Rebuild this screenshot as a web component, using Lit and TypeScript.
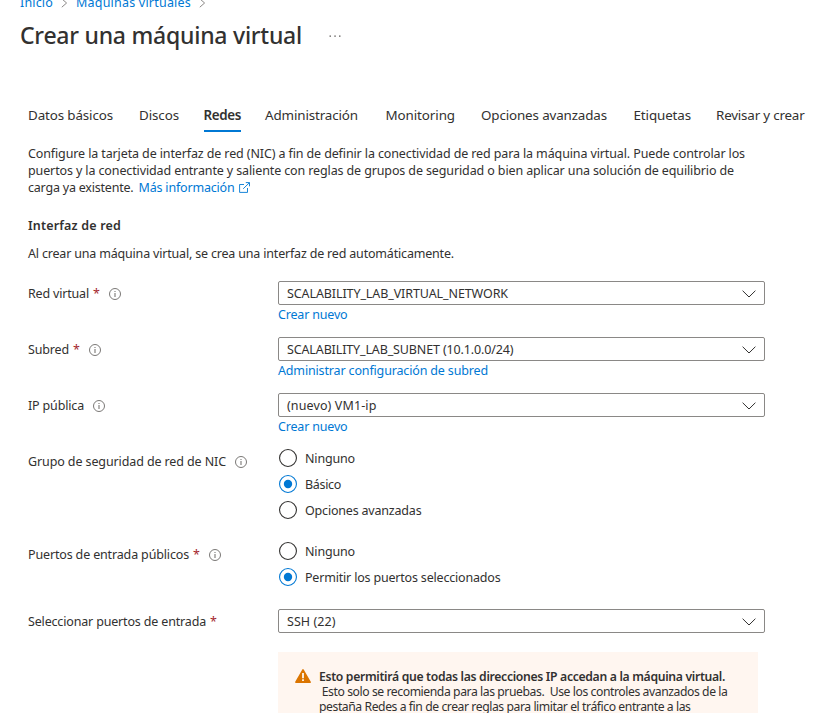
import { LitElement, html, css, svg, nothing } from "lit";
import { customElement, property } from "lit/decorators.js";

/** One line of text, tracked so that its advance equals `width` pixels. */
@customElement("text-run")
class TextRun extends LitElement {
  @property() text = "";
  @property({ type: Number }) width = 0;

  static styles = css`
    :host { display: inline-block; white-space: pre; flex: none; }
    .run { display: inline-block; }
  `;

  firstUpdated() {
    const run = this.renderRoot.querySelector(".run") as HTMLElement;
    const natural = run.getBoundingClientRect().width;
    run.style.letterSpacing = `${(this.width - natural) / this.text.length}px`;
  }

  render() {
    return html`<span class="run">${this.text}</span>`;
  }
}

const t = (text: string, width: number) => html`<text-run .text=${text} .width=${width}></text-run>`;

const infoIcon = html`<svg class="info" viewBox="0 0 12 12" width="12" height="12">
  <circle cx="6" cy="6" r="5.5" fill="none" stroke="#7a7876" />
  <path d="M6 5v4M6 3v1" stroke="#7a7876" stroke-width="1.1" fill="none" />
</svg>`;

const chevronDown = html`<svg class="chevron" viewBox="0 0 14 8" width="14" height="8">
  <path d="M.6.7 7 7 13.4.7" fill="none" stroke="#323130" />
</svg>`;

const crumbArrow = html`<svg class="arrow" viewBox="0 0 7 10" width="7" height="10">
  <path d="M.8.8 5.6 5 .8 9.2" fill="none" stroke="#8a8886" />
</svg>`;

const externalIcon = html`<svg class="external" viewBox="0 0 11 11" width="11" height="11">
  <path d="M5 2.5H.6v7.9h7.9V6M6.8.6h3.7v3.7M10.3.8 4.2 6.8" fill="none" stroke="#0078d4" stroke-width=".9" />
</svg>`;

const warningIcon = html`<svg class="warn-icon" viewBox="0 0 16 14" width="16" height="14">
  <path d="M8 .9 15.1 13.2H.9Z" fill="#db7500" stroke="#db7500" stroke-width="1.6" stroke-linejoin="round" />
  <path d="M8 4v5.2M8 10.2v1.8" stroke="#fff" stroke-width="1.7" />
</svg>`;

type Run = [string, number];

const TABS: Run[] = [
  ["Datos básicos", 85],
  ["Discos", 40],
  ["Redes", 37.5],
  ["Administración", 93],
  ["Monitoring", 69.5],
  ["Opciones avanzadas", 126],
  ["Etiquetas", 57.5],
  ["Revisar y crear", 88.5],
];

@customElement("app-root")
class AppRoot extends LitElement {
  static styles = css`
    :host {
      display: block;
      box-sizing: border-box;
      height: 713px;
      overflow: hidden;
      background: #fff;
      color: #323130;
      font: 12.5px/17px "Noto Sans", "Open Sans", sans-serif;
    }
    svg { display: block; flex: none; }
    .crumbs {
      display: flex;
      align-items: flex-end;
      height: 11px;
      padding-left: 20px;
      color: #0078d4;
    }
    .crumbs .arrow { margin: 0 8px 3px; }
    .title {
      display: flex;
      align-items: center;
      gap: 27px;
      margin: 0;
      padding: 8px 0 0 20px;
      font-size: 23px;
      font-weight: 550;
      line-height: 32px;
    }
    .title svg { margin-top: 2px; }
    .tabs {
      display: grid;
      grid-template-columns: 111px 64.5px 61.5px 120.5px 95.5px 152.5px 82.5px auto;
      justify-items: start;
      padding: 55px 0 0 28px;
      font-size: 13.4px;
    }
    .tab { height: 24px; line-height: 18px; border-bottom: 2px solid transparent; }
    .tab.active { font-weight: 600; border-color: #0078d4; }
    .content { padding: 13px 0 0 28px; }
    .line { display: flex; height: 17px; }
    .link { color: #0078d4; }
    .line .link { margin-left: 5px; }
    .external { margin: 3px 0 0 4px; }
    .heading { margin-top: 21px; font-weight: 600; }
    .sub { margin: 11px 0 19px; }
    .row { display: grid; grid-template-columns: 250px 487px; }
    .row.pick { height: 56px; }
    .label { display: flex; height: 24px; align-items: center; }
    .star { width: 7px; margin-left: 4px; color: #a4262c; }
    .info { margin: 2px 0 0 9px; }
    .select {
      display: flex;
      box-sizing: border-box;
      height: 24px;
      align-items: center;
      justify-content: space-between;
      padding: 0 8px;
      border: 1px solid #8a8886;
      border-radius: 2px;
    }
    .chevron { margin-top: 1px; }
    .below { display: flex; height: 17px; padding-top: 1px; }
    .radios { display: flex; flex-direction: column; gap: 8px; padding-left: 1px; }
    .radio { display: flex; align-items: center; gap: 8px; height: 18px; }
    .nic { height: 93px; }
    .ports { height: 67px; }
    .warning {
      display: flex;
      box-sizing: border-box;
      width: 480px;
      height: 90px;
      margin: 19px 0 0 250px;
      padding: 17px 17px 0;
      background: #fff6f0;
    }
    .warn-text { margin-left: 8px; font-size: 12.2px; line-height: 15px; }
    .warn-text text-run { display: block; }
    .strong { font-weight: 650; }
  `;

  label([text, width]: Run, required: boolean, info: boolean) {
    return html`<div class="label">
      ${t(text, width)}${required ? html`<span class="star">*</span>` : nothing}${info ? infoIcon : nothing}
    </div>`;
  }

  pick(label: Run, required: boolean, info: boolean, value: Run, link?: Run) {
    return html`<div class="row ${link ? "pick" : ""}">
      ${this.label(label, required, info)}
      <div>
        <div class="select">${t(...value)}${chevronDown}</div>
        ${link ? html`<div class="below link">${t(...link)}</div>` : nothing}
      </div>
    </div>`;
  }

  radio(text: Run, on: boolean) {
    return html`<div class="radio">
      <svg viewBox="0 0 18 18" width="18" height="18">
        <circle cx="9" cy="9" r="8.45" fill="none" stroke=${on ? "#0078d4" : "#323130"} stroke-width="1.1" />
        ${on ? svg`<circle cx="9" cy="9" r="4.2" fill="#0078d4" />` : nothing}
      </svg>
      ${t(...text)}
    </div>`;
  }

  render() {
    return html`
      <nav class="crumbs">
        ${t("Inicio", 33)}${crumbArrow}${t("Máquinas virtuales", 115)}${crumbArrow}
      </nav>
      <h1 class="title">
        ${t("Crear una máquina virtual", 282)}
        <svg viewBox="0 0 12 2" width="12" height="2">
          <path d="M.5.5h1.5v1.3H.5zM5.3.5h1.5v1.3H5.3zM10 .5h1.5v1.3H10z" fill="#605e5c" />
        </svg>
      </h1>
      <div class="tabs">
        ${TABS.map((tab) => html`<div class="tab ${tab[0] === "Redes" ? "active" : ""}">${t(...tab)}</div>`)}
      </div>
      <main class="content">
        <div class="line">${t("Configure la tarjeta de interfaz de red (NIC) a fin de definir la conectividad de red para la máquina virtual. Puede controlar los", 717)}</div>
        <div class="line">${t("puertos y la conectividad entrante y saliente con reglas de grupos de seguridad o bien aplicar una solución de equilibrio de", 706)}</div>
        <div class="line">
          ${t("carga ya existente.", 105.5)}
          <span class="link">${t("Más información", 96)}</span>${externalIcon}
        </div>
        <div class="line heading">${t("Interfaz de red", 93)}</div>
        <div class="line sub">${t("Al crear una máquina virtual, se crea una interfaz de red automáticamente.", 426)}</div>
        ${this.pick(["Red virtual", 61], true, true, ["SCALABILITY_LAB_VIRTUAL_NETWORK", 221], ["Crear nuevo", 69.5])}
        ${this.pick(["Subred", 41], true, true, ["SCALABILITY_LAB_SUBNET (10.1.0.0/24)", 226.5], ["Administrar configuración de subred", 210])}
        ${this.pick(["IP pública", 56], false, true, ["(nuevo) VM1-ip", 89.5], ["Crear nuevo", 69.5])}
        <div class="row nic">
          ${this.label(["Grupo de seguridad de red de NIC", 198], false, true)}
          <div class="radios">
            ${this.radio(["Ninguno", 50], false)}
            ${this.radio(["Básico", 36], true)}
            ${this.radio(["Opciones avanzadas", 116.5], false)}
          </div>
        </div>
        <div class="row ports">
          ${this.label(["Puertos de entrada públicos", 161], true, true)}
          <div class="radios">
            ${this.radio(["Ninguno", 50], false)}
            ${this.radio(["Permitir los puertos seleccionados", 195.5], true)}
          </div>
        </div>
        ${this.pick(["Seleccionar puertos de entrada", 178], true, false, ["SSH (22)", 48.5])}
        <div class="warning">
          ${warningIcon}
          <div class="warn-text">
            <div class="strong">${t("Esto permitirá que todas las direcciones IP accedan a la máquina virtual.", 406)}</div>
            ${t(" Esto solo se recomienda para las pruebas.  Use los controles avanzados de la", 408.5)}
            ${t("pestaña Redes a fin de crear reglas para limitar el tráfico entrante a las", 371.5)}
          </div>
        </div>
      </main>
    `;
  }
}
